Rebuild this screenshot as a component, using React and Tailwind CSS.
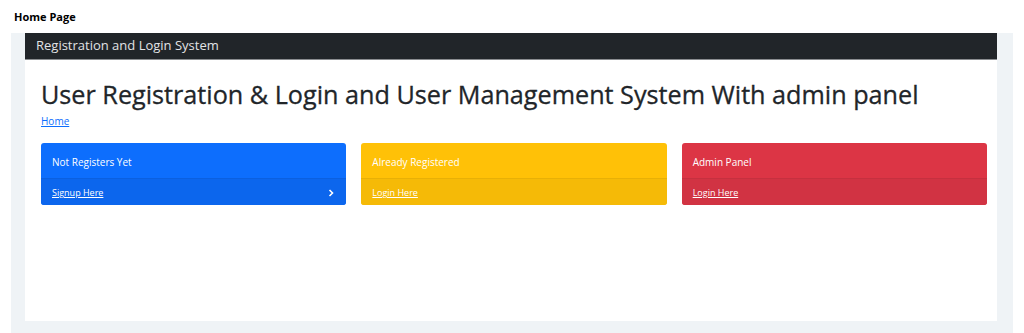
export default function App() {
  const font = { fontFamily: '"Open Sans", "Noto Sans", sans-serif' };
  return (
    <div className="w-[1024px] h-[333px] bg-white overflow-hidden" style={font}>
      <div className="h-[33px] pl-[14px] pt-[9px] text-[11px] font-bold text-black leading-[16px]">Home Page</div>
      <div className="ml-[11px] mr-[11px] h-[300px] bg-[#eff3f6] pl-[14px] pr-[16px] pb-[12px] flex flex-col">
        <div className="h-[27px] bg-[#212529] border-b border-[#8a8d90] flex items-center pl-[11px] text-[13px] text-[#e2e3e5]">
          Registration and Login System
        </div>
        <div className="flex-1 bg-white pl-[16px] pr-[10px]">
          <h1 className="mt-[16px] text-[25.2px] font-[500] text-[#212529] leading-[36px] [-webkit-text-stroke:0.3px_#212529]">
            User Registration &amp; Login and User Management System With admin panel
          </h1>
          <a href="#" className="block mt-[2px] text-[10px] text-[#0d6efd] underline leading-[14px]">Home</a>
          <div className="mt-[15px] grid grid-cols-3 gap-[15px]">
            <Card bg="bg-[#0d6efd]" foot="bg-[#0c66ed]" title="Not Registers Yet" link="Signup Here" chevron />
            <Card bg="bg-[#ffc107]" foot="bg-[#f5ba07]" title="Already Registered" link="Login Here" />
            <Card bg="bg-[#dc3545]" foot="bg-[#d13343]" title="Admin Panel" link="Login Here" />
          </div>
        </div>
      </div>
    </div>
  );
}

function Card({ bg, foot, title, link, chevron }) {
  return (
    <div className={`${bg} rounded-[3px] overflow-hidden text-white`}>
      <div className="h-[35px] flex items-center px-[11px] pt-[3px] text-[10px]">{title}</div>
      <div className={`${foot} h-[27px] flex items-center justify-between px-[11px] pt-[2px] border-t border-black/5`}>
        <a href="#" className="text-[9px] underline text-white">{link}</a>
        {chevron && (
          <svg width="6" height="8" viewBox="0 0 6 8" className="mr-[1px]">
            <path d="M1.5 1 L4.5 4 L1.5 7" stroke="white" strokeWidth="1.6" fill="none" />
          </svg>
        )}
      </div>
    </div>
  );
}
